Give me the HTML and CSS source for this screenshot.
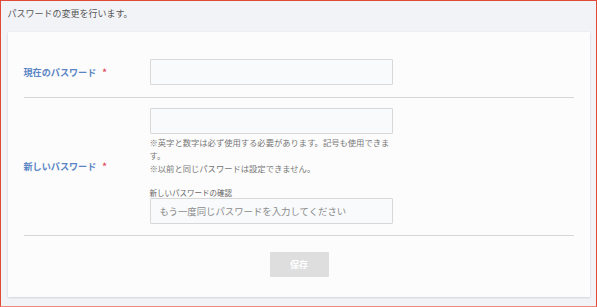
FILE: index.html
```html
<!DOCTYPE html>
<html lang="ja">
<head>
<meta charset="utf-8">
<link rel="stylesheet" href="styles.css">
</head>
<body>
<div class="frame">
  <p class="intro">パスワードの変更を行います。</p>
  <div class="card">
    <div class="row">
      <div class="label">現在のパスワード<span class="req">*</span></div>
      <div class="field">
        <input class="input" type="password">
      </div>
    </div>
    <div class="row row-new">
      <div class="label">新しいパスワード<span class="req">*</span></div>
      <div class="field">
        <input class="input" type="password">
        <p class="hint">※英字と数字は必ず使用する必要があります。記号も使用できます。<br>※以前と同じパスワードは設定できません。</p>
        <div class="sublabel">新しいパスワードの確認</div>
        <input class="input" type="password" placeholder="もう一度同じパスワードを入力してください">
      </div>
    </div>
    <div class="actions">
      <button class="btn" type="button">保存</button>
    </div>
  </div>
</div>
</body>
</html>
```

FILE: styles.css
```css
* { box-sizing: border-box; }
html, body {
  margin: 0;
  padding: 0;
  width: 597px;
  height: 307px;
  overflow: hidden;
  font-family: "Noto Sans CJK JP", "Noto Sans", sans-serif;
}
.frame {
  width: 597px;
  height: 307px;
  background: #f2f3f7;
  border: 1.5px solid #e24a38;
  border-bottom-color: #f2877b;
  padding: 0 6.5px;
}
.intro {
  margin: 0;
  height: 30.5px;
  line-height: 26px;
  font-size: 9px;
  color: #555;
}
.card {
  background: #fcfcfc;
  box-shadow: 0 1px 2px rgba(0,0,0,0.12), 0 0 1px rgba(0,0,0,0.08);
  padding: 15px 16px 20px;
  width: 582px;
}
.row {
  display: flex;
  align-items: center;
  padding: 12px 0;
  border-bottom: 1px solid #d6d6d6;
}
.row-new {
  padding: 10px 0 11px;
}
.label {
  width: 126px;
  flex: none;
  font-size: 9.1px;
  font-weight: bold;
  color: #5a84c4;
}
.req {
  color: #e0445a;
  margin-left: 6px;
}
.field {
  width: 243px;
  display: flex;
  flex-direction: column;
}
.input {
  display: block;
  width: 243px;
  height: 26px;
  margin: 0;
  border: 1px solid #d8d8d8;
  border-radius: 1px;
  background: #f9fafc;
  padding: 0 9px;
  font-family: inherit;
  font-size: 9.4px;
  color: #555;
}
.input::placeholder {
  color: #8a8a8a;
}
.hint {
  margin: 2px 0 0;
  font-size: 8.3px;
  line-height: 13px;
  color: #777;
}
.sublabel {
  margin-top: 12px;
  font-size: 7.5px;
  line-height: 11px;
  color: #666;
}
.actions {
  display: flex;
  justify-content: center;
  padding-top: 16px;
}
.btn {
  width: 59px;
  height: 25px;
  border: none;
  background: #dedede;
  color: #fff;
  font-family: inherit;
  font-size: 9px;
  font-weight: bold;
  border-radius: 1px;
  margin-left: 1px;
}
```
